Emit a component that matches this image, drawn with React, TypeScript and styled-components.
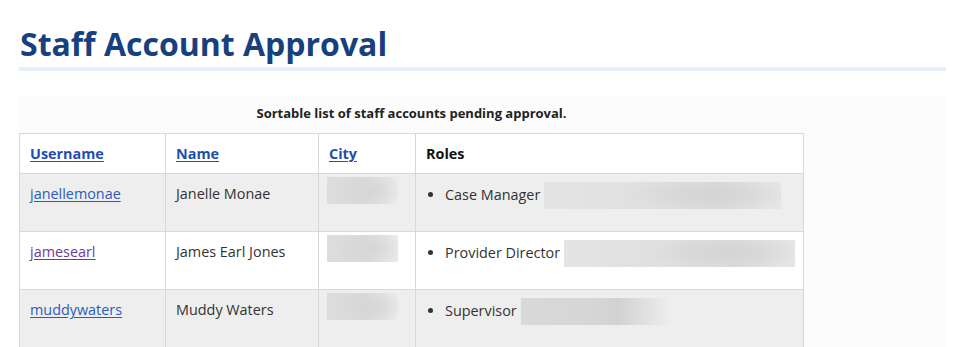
import React from 'react';
import styled, { createGlobalStyle } from 'styled-components';

const GlobalStyle = createGlobalStyle`
  html, body {
    margin: 0;
    padding: 0;
    background: #ffffff;
    overflow: hidden;
  }
  body {
    font-family: "Open Sans", "Liberation Sans", sans-serif;
    color: #333333;
  }
`;

const Page = styled.main`
  padding: 0 25px 0 19px;
`;

const Title = styled.h1`
  font-size: 32px;
  font-weight: 700;
  color: #17407f;
  margin: 0;
  padding: 24px 0 3px 1px;
  line-height: 40px;
  border-bottom: 4px solid #e5effc;
`;

const Panel = styled.section`
  margin-top: 24px;
  background: #fcfcfc;
  padding-bottom: 40px;
`;

const Table = styled.table`
  border-collapse: collapse;
  table-layout: fixed;
  width: 784px;
  font-size: 14.4px;
  line-height: 22px;
`;

const Caption = styled.caption`
  font-size: 13px;
  font-weight: 700;
  color: #222222;
  padding: 8px 0 10px;
  line-height: 20px;
`;

const Row = styled.tr<{ $shaded?: boolean }>`
  background: ${(p) => (p.$shaded ? '#eeeeee' : '#ffffff')};
`;

const HeadCell = styled.th<{ $w: number }>`
  width: ${(p) => p.$w}px;
  text-align: left;
  font-weight: 700;
  color: #111111;
  padding: 9px 10px 8px;
  border: 1px solid #d8d8d8;
`;

const Cell = styled.td<{ $tight?: boolean }>`
  vertical-align: top;
  height: 58px;
  box-sizing: border-box;
  padding: ${(p) => (p.$tight ? '3px 8px' : '9px 10px')};
  border: 1px solid #d8d8d8;
`;

const SortLink = styled.a`
  color: #1e4eb0;
  text-decoration: underline;
  text-underline-offset: 2px;
`;

const UserLink = styled.a<{ $visited?: boolean }>`
  color: ${(p) => (p.$visited ? '#6a3c9e' : '#2a5bbf')};
  text-decoration: underline;
  text-underline-offset: 2px;
`;

const RoleList = styled.ul`
  margin: 0;
  padding-left: 19px;
`;

const RoleItem = styled.li`
  line-height: 22px;
  padding-top: 1px;
  white-space: nowrap;
`;

// redaction bars: flat grey boxes with a soft smear of darker grey inside
const Redacted = styled.span<{ $w: number; $fade?: boolean }>`
  display: inline-block;
  vertical-align: middle;
  width: ${(p) => p.$w}px;
  height: 27px;
  margin-left: 4px;
  margin-top: -2px;
  background: ${(p) =>
    p.$fade
      ? 'linear-gradient(90deg, #d9d9d9 0%, #d6d6d6 45%, #d2d2d2 65%, rgba(236,236,236,0) 100%)'
      : 'radial-gradient(ellipse 35% 60% at 70% 45%, #d4d4d4 0%, rgba(212,212,212,0) 100%), linear-gradient(90deg, #e4e4e4 0%, #e0e0e0 40%, #dadada 75%, #e6e6e6 100%)'};
`;

const CityBlock = styled.span`
  display: block;
  width: 71px;
  height: 27px;
  background: radial-gradient(ellipse 50% 70% at 60% 50%, #d6d6d6 0%, rgba(214,214,214,0) 100%),
    linear-gradient(90deg, #dddddd 0%, #dadada 55%, #ececec 100%);
`;

type Account = {
  username: string;
  name: string;
  role: string;
  redactW: number;
  fade?: boolean;
  visited?: boolean;
};

const accounts: Account[] = [
  { username: 'janellemonae', name: 'Janelle Monae', role: 'Case Manager', redactW: 237 },
  { username: 'jamesearl', name: 'James Earl Jones', role: 'Provider Director', redactW: 231, visited: true },
  { username: 'muddywaters', name: 'Muddy Waters', role: 'Supervisor', redactW: 150, fade: true },
];

export default function App() {
  return (
    <Page>
      <GlobalStyle />
      <Title>Staff Account Approval</Title>
      <Panel>
        <Table>
          <Caption>Sortable list of staff accounts pending approval.</Caption>
          <thead>
            <Row>
              <HeadCell $w={125}><SortLink href="#">Username</SortLink></HeadCell>
              <HeadCell $w={132}><SortLink href="#">Name</SortLink></HeadCell>
              <HeadCell $w={76}><SortLink href="#">City</SortLink></HeadCell>
              <HeadCell $w={367}>Roles</HeadCell>
            </Row>
          </thead>
          <tbody>
            {accounts.map((a, i) => (
              <Row key={a.username} $shaded={i % 2 === 0}>
                <Cell>
                  <UserLink href="#" $visited={a.visited}>{a.username}</UserLink>
                </Cell>
                <Cell>{a.name}</Cell>
                <Cell $tight>
                  <CityBlock />
                </Cell>
                <Cell>
                  <RoleList>
                    <RoleItem>
                      {a.role}
                      <Redacted $w={a.redactW} $fade={a.fade} />
                    </RoleItem>
                  </RoleList>
                </Cell>
              </Row>
            ))}
          </tbody>
        </Table>
      </Panel>
    </Page>
  );
}
